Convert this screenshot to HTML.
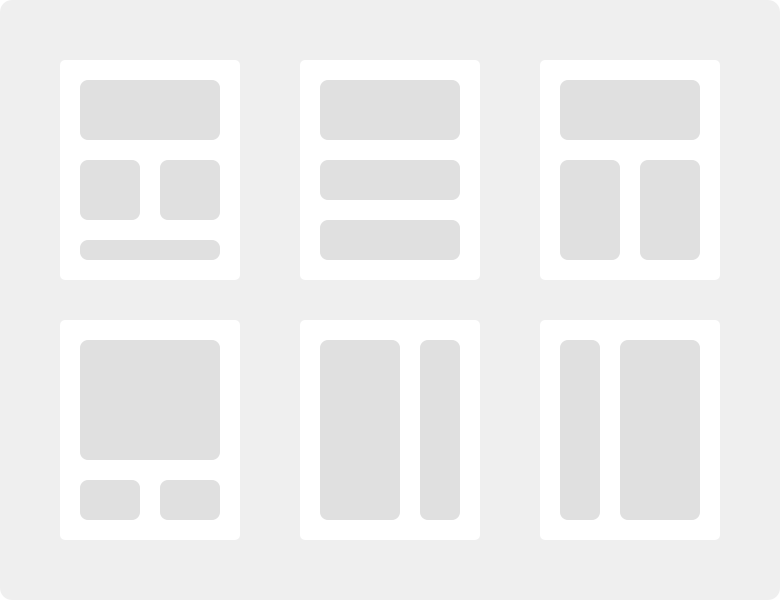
<!DOCTYPE html><html><head><style>
body{margin:0;background:#fff;}
.bg{position:absolute;left:0;top:0;width:780px;height:600px;background:#efefef;border-radius:12px;}
.c{position:absolute;background:#fff;border-radius:5px;width:180px;height:220px;}
.b{position:absolute;background:#e0e0e0;border-radius:8px;}
</style></head><body><div class="bg">
<div class="c" style="left:60px;top:60px">
<div class="b" style="left:20px;top:20px;width:140px;height:60px"></div>
<div class="b" style="left:20px;top:100px;width:60px;height:60px"></div>
<div class="b" style="left:100px;top:100px;width:60px;height:60px"></div>
<div class="b" style="left:20px;top:180px;width:140px;height:20px"></div>
</div>
<div class="c" style="left:300px;top:60px">
<div class="b" style="left:20px;top:20px;width:140px;height:60px"></div>
<div class="b" style="left:20px;top:100px;width:140px;height:40px"></div>
<div class="b" style="left:20px;top:160px;width:140px;height:40px"></div>
</div>
<div class="c" style="left:540px;top:60px">
<div class="b" style="left:20px;top:20px;width:140px;height:60px"></div>
<div class="b" style="left:20px;top:100px;width:60px;height:100px"></div>
<div class="b" style="left:100px;top:100px;width:60px;height:100px"></div>
</div>
<div class="c" style="left:60px;top:320px">
<div class="b" style="left:20px;top:20px;width:140px;height:120px"></div>
<div class="b" style="left:20px;top:160px;width:60px;height:40px"></div>
<div class="b" style="left:100px;top:160px;width:60px;height:40px"></div>
</div>
<div class="c" style="left:300px;top:320px">
<div class="b" style="left:20px;top:20px;width:80px;height:180px"></div>
<div class="b" style="left:120px;top:20px;width:40px;height:180px"></div>
</div>
<div class="c" style="left:540px;top:320px">
<div class="b" style="left:20px;top:20px;width:40px;height:180px"></div>
<div class="b" style="left:80px;top:20px;width:80px;height:180px"></div>
</div>
</div></body></html>
